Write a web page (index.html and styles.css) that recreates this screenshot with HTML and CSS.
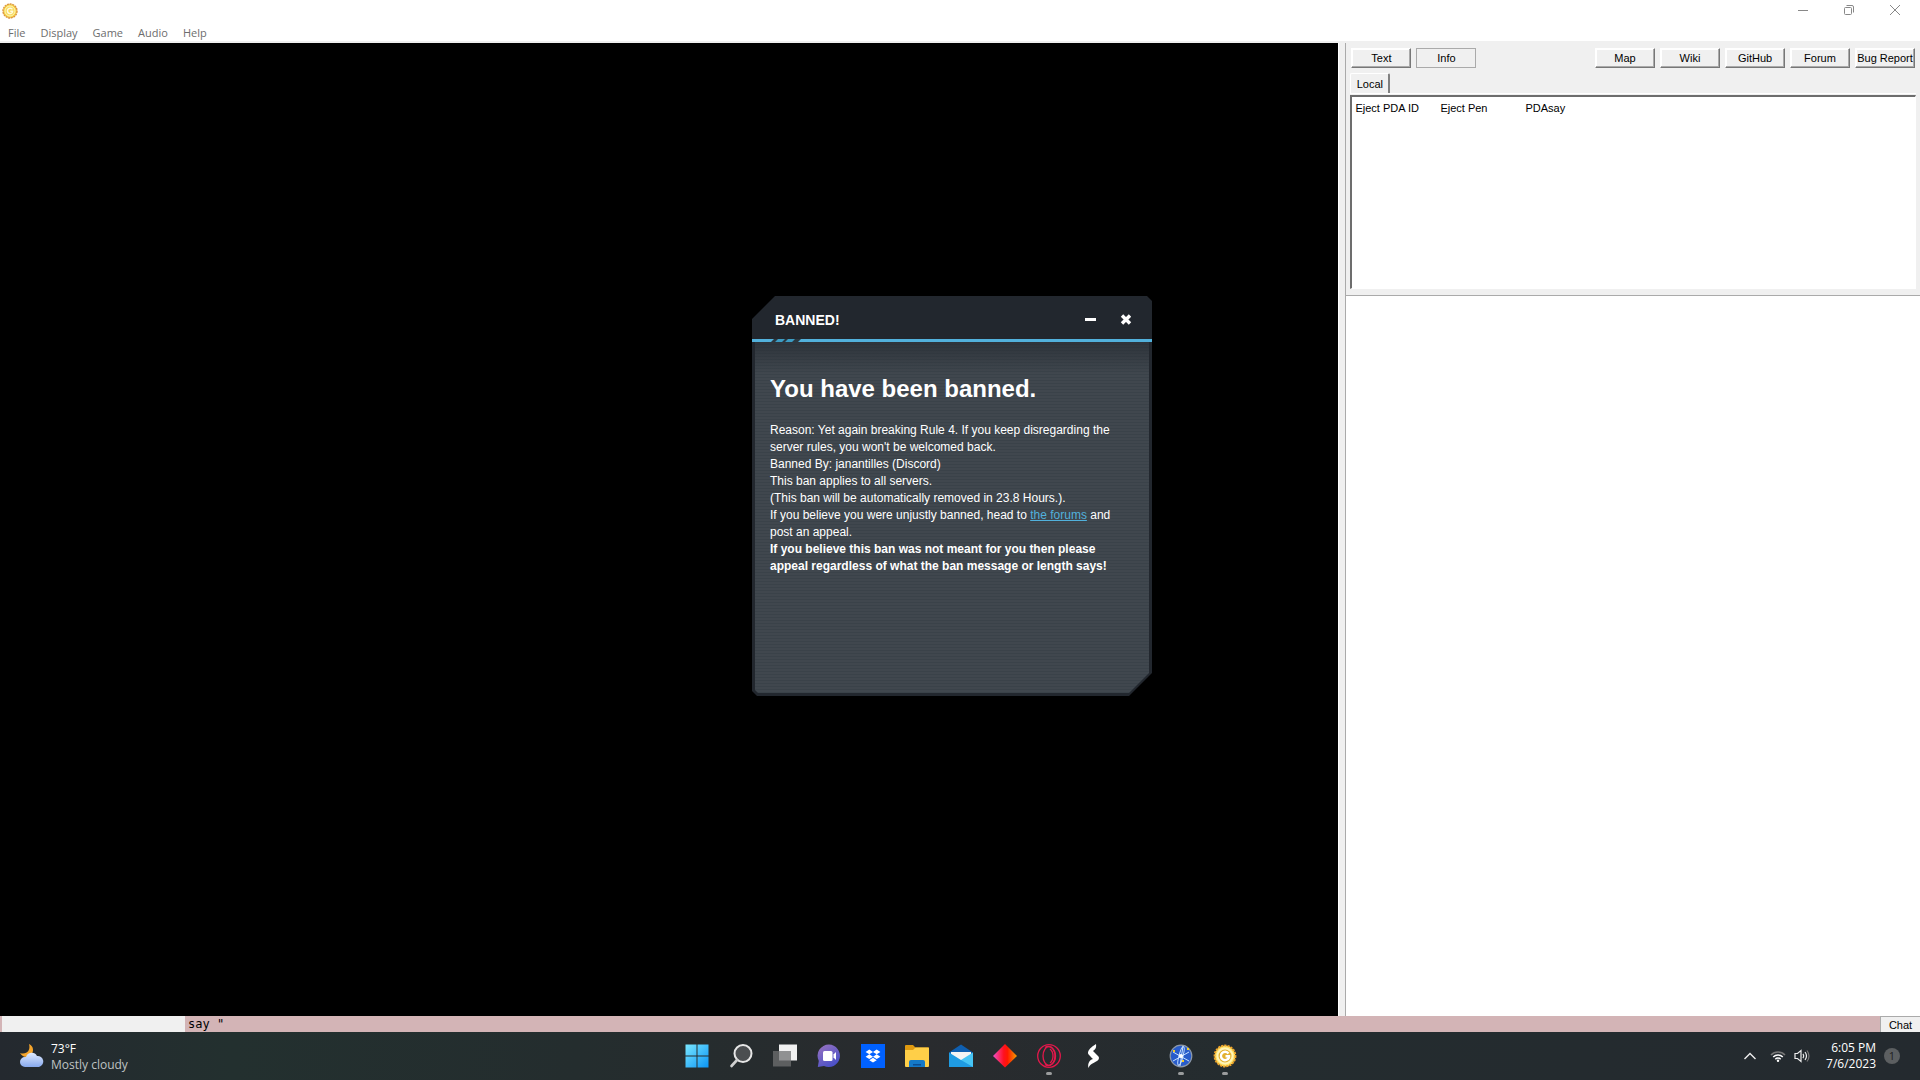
FILE: index.html
```
<!DOCTYPE html>
<html lang="en">
<head>
	<meta charset="utf-8">
	<title>Banned!</title>
	<meta name="viewport" content="width=device-width, initial-scale=1.0">
	<link rel="stylesheet" href="styles.css">
</head>
<body>

	<header class="titlebar">
		<svg class="app-icon" viewBox="0 0 16 16">
			<circle cx="8" cy="8" r="7" fill="#f6d548" stroke="#dc9440" stroke-width="1.4" stroke-dasharray="2 .7"/>
			<circle cx="8" cy="8" r="5" fill="#f8dc5c" stroke="#fff3bd"/>
			<path d="M10.4 6.4A2.7 2.7 0 1 0 10.6 9V8.3H8.2" fill="none" stroke="#fffbe0" stroke-width="1.5"/>
		</svg>
		<div class="window-controls">
			<button aria-label="Minimize"><svg viewBox="0 0 10 10"><path d="M0 5.5h10"/></svg></button>
			<button aria-label="Restore"><svg viewBox="0 0 10 10"><rect x=".5" y="2.5" width="7" height="7" rx="1"/><path d="M2.5 .5H8a1.5 1.5 0 0 1 1.5 1.5V7.5"/></svg></button>
			<button aria-label="Close"><svg viewBox="0 0 10 10"><path d="M0 0l10 10M10 0L0 10"/></svg></button>
		</div>
	</header>

	<nav class="menubar">
		<button>File</button>
		<button>Display</button>
		<button>Game</button>
		<button>Audio</button>
		<button>Help</button>
	</nav>

	<main class="client">
		<section class="map"></section>
		<div class="splitter"></div>
		<section class="side">
			<div class="info-pane">
				<div class="toolbar">
					<button class="btn">Text</button>
					<button class="btn flat">Info</button>
					<span class="spacer"></span>
					<button class="btn">Map</button>
					<button class="btn">Wiki</button>
					<button class="btn">GitHub</button>
					<button class="btn">Forum</button>
					<button class="btn">Bug Report</button>
				</div>
				<div class="tabs"><button class="tab">Local</button></div>
				<div class="tab-frame">
					<div class="verbs">
						<button>Eject PDA ID</button>
						<button>Eject Pen</button>
						<button>PDAsay</button>
					</div>
				</div>
			</div>
			<div class="output"></div>
		</section>
	</main>

	<!-- browser popup, floats over the map -->
	<div class="popup" role="dialog" aria-labelledby="popup-title">
		<div class="popup-head">
			<span id="popup-title">BANNED!</span>
			<button aria-label="Minimize"><svg width="12" height="12" viewBox="0 0 12 12"><path d="M0 4h11v3H0z" fill="#fff"/></svg></button>
			<button aria-label="Close"><svg width="12" height="12" viewBox="0 0 12 12"><path d="M2 1.500l8 8M10 1.500l-8 8" stroke="#fff" stroke-width="3.4"/></svg></button>
		</div>
		<svg class="popup-line" viewBox="0 0 60 3" preserveAspectRatio="xMinYMin">
			<path d="M22 0h27l-3 3H19z" fill="#2b3840"/>
			<path d="M26 0h7l-3 3h-7zM36 0h7l-3 3h-7z" fill="#3c9cc4"/>
		</svg>
		<div class="popup-body">
			<h1>You have been banned.</h1>
			<p>Reason: Yet again breaking Rule 4. If you keep disregarding the server rules, you won't be welcomed back.</p>
			<p>Banned By: janantilles (Discord)</p>
			<p>This ban applies to all servers.</p>
			<p>(This ban will be automatically removed in 23.8 Hours.).</p>
			<p>If you believe you were unjustly banned, head to <a href="#">the forums</a> and post an appeal.</p>
			<p><b>If you believe this ban was not meant for you then please appeal regardless of what the ban message or length says!</b></p>
		</div>
	</div>

	<div class="command">
		<div class="status"></div>
		<input type="text" aria-label="Command" value='say "'>
		<button>Chat</button>
	</div>

	<footer class="taskbar">
		<a class="weather" href="#">
			<svg width="24" height="24" viewBox="0 0 24 24">
				<defs><linearGradient id="cloud" x2="0" y2="1"><stop stop-color="#e0ebff"/><stop offset="1" stop-color="#87a9ee"/></linearGradient></defs>
				<path d="M9 0c5 2 5 8 2 11S3 14 0 9c6 2 11-2 9-9z" fill="#f5a52c"/>
				<path d="M5 23a5 5 0 0 1 0-10h1a6 6 0 0 1 11-1 5.600 5.600 0 0 1 2 11z" fill="url(#cloud)"/>
			</svg>
			<span>73°F<br><small>Mostly cloudy</small></span>
		</a>

		<div class="apps">
			<button aria-label="Start">
				<svg viewBox="0 0 24 24">
					<defs><linearGradient id="win" x2="1" y2="1"><stop stop-color="#79e6ff"/><stop offset="1" stop-color="#0b95f5"/></linearGradient></defs>
					<path d="M.5.5h11v11H.5zM12.500.5h11v11h-11zM.5 12.500h11v11H.5zM12.500 12.500h11v11h-11z" fill="url(#win)"/>
				</svg>
			</button>
			<button aria-label="Search">
				<svg viewBox="0 0 24 24"><circle cx="14" cy="9.500" r="8.500" fill="#4b4e50" stroke="#e6e6e6" stroke-width="2"/><path d="M8 16l-5.500 6" stroke="#d0d0d0" stroke-width="2.600" stroke-linecap="round"/></svg>
			</button>
			<button aria-label="Task view">
				<svg viewBox="0 0 24 24"><path d="M6 .5h18v16H6z" fill="#f1f1f1"/><path d="M0 7h18v15.500H0z" fill="#5d5f60"/><path d="M6 7h12v9.500H6z" fill="#909192"/></svg>
			</button>
			<button aria-label="Chat">
				<svg viewBox="0 0 24 24">
					<defs><linearGradient id="teams" x2=".6" y2="1"><stop stop-color="#9b74c0"/><stop offset="1" stop-color="#4a50c8"/></linearGradient></defs>
					<path d="M12 .5a11.300 11.300 0 1 1-5 21.600L.8 23l1-6A11.300 11.300 0 0 1 12 .5z" fill="url(#teams)"/>
					<rect x="6" y="7" width="9.500" height="10" rx="1.500" fill="#fff"/><path d="M16.500 10.500L19 8v8l-2.500-2.500z" fill="#fff"/>
				</svg>
			</button>
			<button aria-label="Dropbox">
				<svg viewBox="0 0 24 24"><path d="M0 0h24v24H0z" fill="#0061ff"/><path d="M8.300 5.500l3.700 2.400-3.700 2.400-3.700-2.400zM15.700 5.500l3.700 2.400-3.700 2.400L12 7.900zM8.300 10.300l3.700 2.400-3.700 2.400-3.700-2.400zM15.700 10.300l3.700 2.400-3.700 2.400-3.700-2.400zM12 13.800l3.700 2.400L12 18.600l-3.700-2.400z" fill="#fff"/></svg>
			</button>
			<button aria-label="File Explorer">
				<svg viewBox="0 0 24 24"><path d="M0 2q0-1 1-1h7l2.500 2.500H24V10H0z" fill="#e09a10"/><path d="M0 6h8l2.500-2.500H23q1 0 1 1V22q0 1-1 1H1q-1 0-1-1z" fill="#ffcf48"/><path d="M4 23v-5q0-2 2-2h12q2 0 2 2v5z" fill="#1479c8"/><path d="M8 20h8v1.500H8z" fill="#0a4d92"/></svg>
			</button>
			<button aria-label="Mail">
				<svg viewBox="0 0 24 24"><path d="M0 8.500L12 .5l12 8V12H0z" fill="#0f5fb0"/><path d="M2 8h20v9H2z" fill="#f4f4f4"/><path d="M24 8.500L12 16 1 23h23z" fill="#47c5f5"/><path d="M0 8.500l12 7.500 12 7H0z" fill="#1f9be2"/></svg>
			</button>
			<button aria-label="Creative tool">
				<svg viewBox="0 0 24 24">
					<defs><linearGradient id="dia"><stop stop-color="#f050c8"/><stop offset=".45" stop-color="#ff1020"/><stop offset=".6" stop-color="#ff1800"/><stop offset="1" stop-color="#f5a000"/></linearGradient></defs>
					<path d="M12 0l12 12-12 11.500L0 12z" fill="url(#dia)"/>
				</svg>
			</button>
			<button class="running" aria-label="Opera GX">
				<svg viewBox="0 0 24 24" fill="none" stroke="#e3184b" stroke-width="1.300"><circle cx="12" cy="12" r="11.300"/><ellipse cx="12" cy="12" rx="6" ry="9.500"/><path d="M8 3.500c4-3 10.500 1 10.500 8.500S12 23.500 8 20.500M13 5c4 3 4 11 0 14"/></svg>
			</button>
			<button aria-label="Streamlabs">
				<svg viewBox="0 0 24 24"><path d="M15 0C10 3 7 6 7 9c0 1 1 2 5 6-4 1-5.500 5-4.500 9 1-3 3-4 5-5 3-1.500 5.500-3 5.500-5 0-1.500-2-3-4-5l-2-2c3-2 3.500-4 3-7z" fill="#fff"/></svg>
			</button>
			<span></span>
			<button class="running" aria-label="BYOND">
				<svg viewBox="0 0 24 24"><circle cx="12" cy="12" r="10.800" fill="#285cca" stroke="#8e99a8" stroke-width="1.200"/><g fill="none" stroke="#c8e2ff" stroke-width="1"><path d="M14 2l-3 20M4 8l16 9M4 17l16-9"/><ellipse cx="12" cy="12" rx="2" ry="9.500" transform="rotate(15 12 12)"/></g><circle cx="12" cy="12" r="2" fill="#fff"/><path d="M4 6h2v2H4zM18 4h2v2h-2zM13 16h2v2h-2z" fill="#f5cd28"/></svg>
			</button>
			<button class="running" aria-label="Goonstation">
				<svg viewBox="0 0 24 24"><circle cx="12" cy="12" r="10.400" fill="#ffe56a" stroke="#f0a52b" stroke-width="2" stroke-dasharray="2.200 1"/><circle cx="12" cy="12" r="7.500" fill="#e3b02f" stroke="#fff4b8" stroke-width="2"/><path d="M15.500 9.500A4.200 4.200 0 1 0 16 13.500v-1.300h-3.500" fill="none" stroke="#fff" stroke-width="2.400"/></svg>
			</button>
		</div>

		<div class="tray">
			<button aria-label="Hidden icons"><svg width="12" height="8" viewBox="0 0 12 8"><path d="M.5 7L6 1.500 11.500 7" fill="none" stroke="#eee" stroke-width="1.400"/></svg></button>
			<button aria-label="Network">
				<svg width="16" height="12" viewBox="0 0 16 12" fill="none" stroke-width="1.500"><path d="M1 5a9.800 9.800 0 0 1 14 0" stroke="#777"/><path d="M3.200 7a6.800 6.800 0 0 1 9.600 0M5.300 9.200a3.800 3.800 0 0 1 5.400 0" stroke="#fff"/><circle cx="8" cy="10.800" r="1.200" fill="#fff"/></svg>
			</button>
			<button aria-label="Volume">
				<svg width="16" height="14" viewBox="0 0 16 14" fill="none" stroke="#eee" stroke-width="1.200"><path d="M1 4.500h2.500L7 1.500v11L3.500 9.500H1zM9 4.800q1.500 2.200 0 4.400M11 3q3 4 0 8"/><path d="M13 1.500q4 5.500 0 11" stroke="#777"/></svg>
			</button>
			<button class="clock">6:05 PM<br>7/6/2023</button>
			<button class="badge" aria-label="1 notification">1</button>
		</div>
	</footer>

</body>
</html>
```
FILE: styles.css
```
* {
	box-sizing: border-box;
	margin: 0;
	padding: 0;
}

body {
	display: flex;
	flex-direction: column;
	height: 100vh;
	overflow: hidden;
	background: #fff;
	font-family: "Liberation Sans", Arial, sans-serif;
	font-size: 12px;
}

button {
	border: none;
	background: none;
	font: inherit;
	color: inherit;
}

svg {
	display: block;
	flex: none;
}

/* window frame */
.titlebar {
	display: flex;
	justify-content: space-between;
	align-items: center;
	height: 22px;
	padding: 0 2px;
}

.app-icon {
	width: 16px;
	height: 16px;
}

.window-controls {
	display: flex;
	padding-bottom: 2px;
}

.window-controls button {
	width: 46px;
	padding: 0 18px;
}

.window-controls svg {
	width: 10px;
	height: 10px;
	fill: none;
	stroke: #888;
}

.menubar {
	display: flex;
	gap: 15px;
	height: 21px;
	padding: 1px 0 0 8px;
	border-bottom: 2px solid #f0f0f0;
	font-family: "Open Sans", sans-serif;
	font-size: 11px;
	line-height: 20px;
	color: #6d6d6d;
}

.client {
	display: flex;
	flex: 1;
	min-height: 0;
}

.map {
	flex: 7;
	background: #000;
}

.splitter {
	width: 8px;
	border-right: 1px solid #aaa;
	border-left: 1px solid #fff;
	background: #f0f0f0;
}

.side {
	display: flex;
	flex: 3;
	flex-direction: column;
}

.info-pane {
	display: flex;
	flex-direction: column;
	height: 253px;
	padding: 5px 4px 5px;
	border-bottom: 1px solid #aaa;
	background: #f0f0f0;
	font-size: 11px;
}

.toolbar {
	display: flex;
	gap: 5px;
	padding: 0 1px;
}

.spacer {
	flex: 1;
}

.btn {
	width: 60px;
	height: 20px;
	border: 1px solid;
	border-color: #fff #777 #777 #fff;
	box-shadow: inset -1px -1px #aaa, inset 1px 1px #fff;
	white-space: nowrap;
}

.btn.flat {
	border-color: #aaa;
	box-shadow: none;
}

.tabs {
	display: flex;
	padding-top: 5px;
}

.tab {
	width: 40px;
	height: 20px;
	border-top: 1px solid #fff;
	border-right: 2px solid #808080;
	border-left: 1px solid #fff;
	border-radius: 2px 2px 0 0;
}

.tab-frame {
	flex: 1;
	padding: 1px 0;
	border-top: 1px solid #fff;
}

.verbs {
	display: grid;
	grid-template-columns: repeat(6, 85px);
	align-content: start;
	height: 100%;
	padding: 5px 3px;
	border: 1px solid #fff;
	border-top: 2px solid #6d6d6d;
	border-left: 2px solid #6d6d6d;
	background: #fff;
}

.verbs button {
	text-align: left;
}

.output {
	flex: 1;
	background: #fff;
}

/* popup */
.popup {
	position: absolute;
	top: 296px;
	left: 752px;
	display: flex;
	flex-direction: column;
	width: 400px;
	height: 400px;
	background: #22272e;
	color: #fff;
	clip-path: polygon(23px 0, 395px 0, 100% 5px, 100% 377px, 377px 100%, 5px 100%, 0 395px, 0 23px);
}

.popup-head {
	display: flex;
	align-items: center;
	gap: 23px;
	height: 43px;
	padding: 4px 20px 0 23px;
	font-size: 14px;
	font-weight: bold;
}

.popup-head span {
	flex: 1;
}

.popup-line {
	width: 100%;
	height: 3px;
	background: #52b1dc;
}

.popup-body {
	flex: 1;
	margin: 0 3px 3px;
	padding: 31px 15px;
	background:
		linear-gradient(rgba(34, 39, 46, .6), rgba(34, 39, 46, 0) 32px),
		repeating-linear-gradient(#40474e 0 2px, #3a4249 2px 3px);
	clip-path: polygon(0 0, 100% 0, 100% 331px, 374px 100%, 3px 100%, 0 348px);
	line-height: 17px;
}

.popup-body h1 {
	margin-bottom: 17px;
	font-size: 24px;
	line-height: 32px;
}

.popup-body a {
	color: #52b1dc;
}

/* command line */
.command {
	display: flex;
	height: 16px;
	padding-left: 2px;
	background: #d3b4b6;
}

.status {
	width: 183px;
	background: #f0f0f0;
}

.command input {
	flex: 1;
	min-width: 0;
	padding-left: 3px;
	border: none;
	background: none;
	font: 12px "DejaVu Sans Mono", monospace;
}

.command button {
	width: 40px;
	border-top: 1px solid #aaa;
	border-left: 1px solid #aaa;
	background: #f0f0f0;
	font-size: 11px;
}

/* taskbar */
.taskbar {
	display: grid;
	grid-template-columns: 1fr auto 1fr;
	align-items: center;
	height: 48px;
	background: linear-gradient(90deg, #24292f, #23302f 12%, #242d2e 30%, #292b2e 48%, #242c2f 65%, #242a2f);
	font-family: "Open Sans", sans-serif;
	font-size: 12px;
	line-height: 16px;
	color: #fff;
}

.weather {
	display: flex;
	align-items: center;
	gap: 7px;
	padding-left: 20px;
	color: #fff;
	text-decoration: none;
}

.weather span {
	padding-top: 2px;
}

.weather small {
	font-size: 12px;
	color: #bfc3c3;
}

.apps {
	display: grid;
	grid-template-columns: repeat(13, 44px);
	padding-left: 2px;
}

.apps button {
	position: relative;
	height: 48px;
	padding: 0 10px;
}

.apps svg {
	width: 24px;
	height: 24px;
}

.running::after {
	position: absolute;
	bottom: 5px;
	left: 19px;
	width: 6px;
	height: 3px;
	border-radius: 2px;
	background: #9a9c9d;
	content: "";
}

.tray {
	display: flex;
	justify-content: flex-end;
	align-items: center;
	gap: 8px;
	padding-right: 20px;
}

.tray button:first-child {
	margin-right: 6px;
}

.clock {
	margin-left: 8px;
	font-size: 12px;
	text-align: right;
}

.badge {
	width: 16px;
	height: 16px;
	border-radius: 50%;
	background: #5c5f61;
	font-size: 11px;
	color: #1e2022;
}
```
